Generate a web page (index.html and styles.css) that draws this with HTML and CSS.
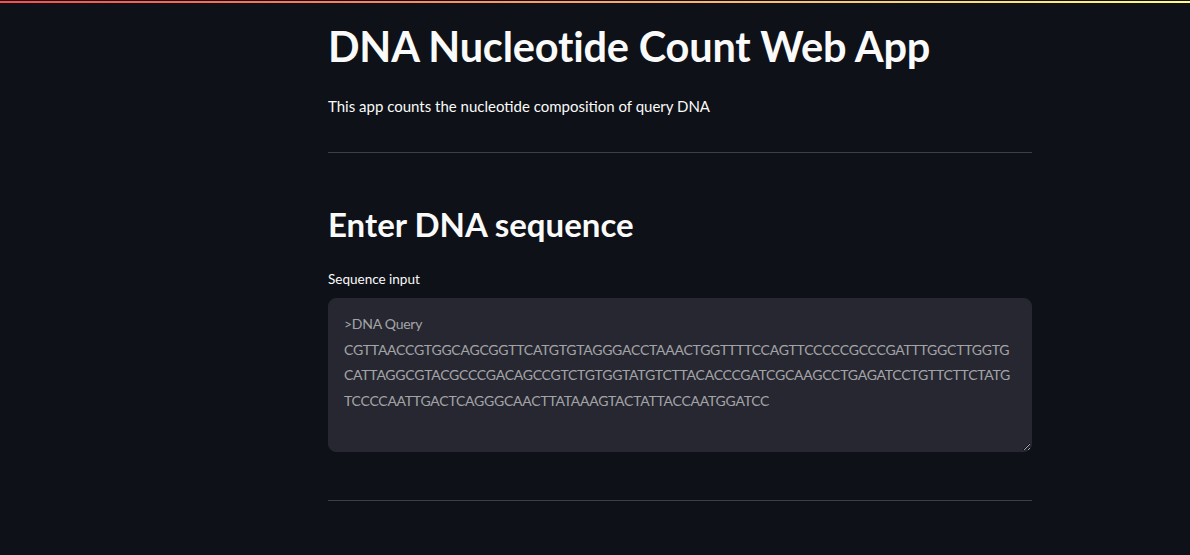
FILE: index.html
```html
<!DOCTYPE html>
<html>
<head>
<meta charset="utf-8">
<link rel="stylesheet" href="styles.css">
</head>
<body>
<div class="decoration"></div>
<main class="main">
  <h1 class="title">DNA Nucleotide Count Web App</h1>
  <p class="lead">This app counts the nucleotide composition of query DNA</p>
  <hr class="rule">
  <h2 class="subtitle">Enter DNA sequence</h2>
  <label class="label" for="seq">Sequence input</label>
  <textarea class="seq" id="seq" spellcheck="false">&gt;DNA Query
CGTTAACCGTGGCAGCGGTTCATGTGTAGGGACCTAAACTGGTTTTCCAGTTCCCCCGCCCGATTTGGCTTGGTG
CATTAGGCGTACGCCCGACAGCCGTCTGTGGTATGTCTTACACCCGATCGCAAGCCTGAGATCCTGTTCTTCTATG
TCCCCAATTGACTCAGGGCAACTTATAAAGTACTATTACCAATGGATCC</textarea>
  <hr class="rule rule-bottom">
</main>
</body>
</html>
```
FILE: styles.css
```css
html, body {
  margin: 0;
  padding: 0;
  background: #0e1117;
  color: #fafafa;
  font-family: "Lato", "Liberation Sans", sans-serif;
  height: 100%;
  overflow: hidden;
}
.decoration {
  margin-top: 1px;
  height: 2px;
  background: linear-gradient(90deg, #ff4b4b, #fffd80);
}
.main {
  margin-left: 328px;
  width: 704px;
  display: flex;
  flex-direction: column;
}
.title {
  margin: 17px 0 0;
  font-size: 41.5px;
  font-weight: 700;
  line-height: 52px;
  letter-spacing: -0.2px;
}
.lead {
  margin: 22px 0 0;
  font-size: 15px;
  line-height: 24px;
}
.rule {
  width: 100%;
  margin: 34px 0 0;
  border: none;
  height: 1px;
  background: rgba(250, 250, 250, 0.2);
}
.subtitle {
  margin: 49px 0 0;
  font-size: 33px;
  font-weight: 700;
  line-height: 44px;
}
.label {
  margin-top: 24px;
  font-size: 13.5px;
  line-height: 18px;
}
.seq {
  margin-top: 10px;
  box-sizing: border-box;
  width: 704px;
  height: 154px;
  background: #262730;
  border: 1px solid #262730;
  border-radius: 8px;
  padding: 12px 15px;
  color: rgba(250, 250, 250, 0.6);
  font-family: "Lato", "Liberation Sans", sans-serif;
  font-size: 14px;
  letter-spacing: -0.25px;
  line-height: 25.5px;
  resize: vertical;
  outline: none;
  white-space: pre-wrap;
  overflow: hidden;
}
.rule-bottom {
  margin-top: 48px;
}
```
